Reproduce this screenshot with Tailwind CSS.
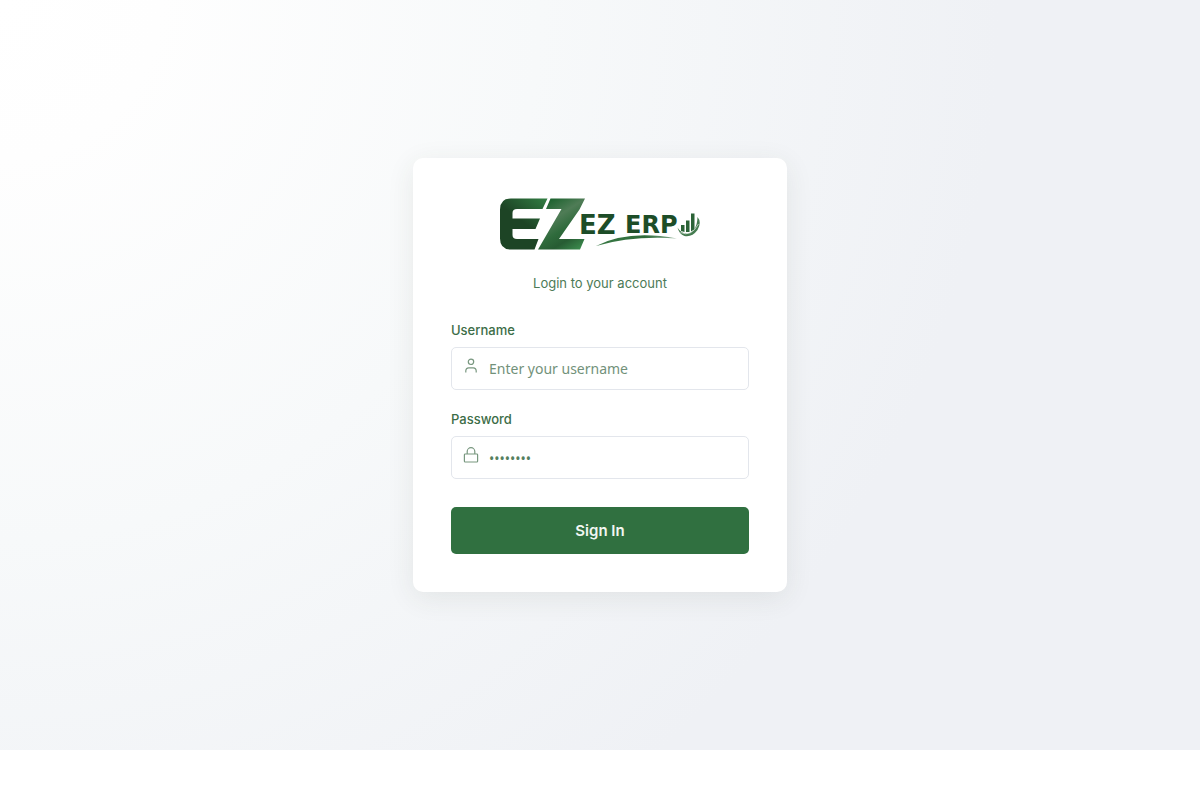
<!DOCTYPE html>
<html lang="en">
<head>
<meta charset="utf-8">
<meta name="viewport" content="width=device-width, initial-scale=1">
<title>EZ ERP - Login</title>
<script src="https://cdn.jsdelivr.net/npm/@tailwindcss/browser@4"></script>
</head>
<body class="flex min-h-screen flex-col bg-white pb-12 font-['Inter',sans-serif]">
<main class="flex grow items-center justify-center bg-[radial-gradient(circle_at_top_left,#ffffff_0,#fefefe_160px,#f7f9fa_540px,#eff1f5_1000px)] px-4">
  <section class="w-full max-w-[374px] rounded-[10px] bg-white px-[38px] pt-10 pb-[38px] shadow-[0_6px_28px_rgba(50,65,45,0.09)]">
    <svg class="mx-auto block h-[52px] w-[202px]" viewBox="499 198 202 52" role="img" aria-label="EZ ERP">
      <defs>
        <linearGradient id="dark" gradientUnits="userSpaceOnUse" x1="518" y1="228" x2="542" y2="196">
          <stop offset="0.2" stop-color="#1d4425"/><stop offset="1" stop-color="#317c42"/>
        </linearGradient>
        <linearGradient id="light" gradientUnits="userSpaceOnUse" x1="548" y1="202" x2="578" y2="250">
          <stop offset="0" stop-color="#1f6431"/><stop offset="0.3" stop-color="#4f7c56"/><stop offset="0.55" stop-color="#2f6b3c"/><stop offset="0.75" stop-color="#275c33"/><stop offset="1" stop-color="#3b8a4d"/>
        </linearGradient>
        <linearGradient id="swoosh" x1="0" y1="0" x2="1" y2="0">
          <stop offset="0" stop-color="#3a7a46"/><stop offset="0.6" stop-color="#2d6b39"/><stop offset="1" stop-color="#8fb096"/>
        </linearGradient>
      </defs>
      <path fill="url(#dark)" d="M511 198.500H547.500L542.500 209H517Q512.500 209 512.500 213V218.500H540L535.500 229H512.500V235Q512.500 239 517 239H538.500L534.500 249.500H511Q500 249.500 500 238.500V209.500Q500 198.500 511 198.500Z"/>
      <path fill="url(#light)" d="M550.500 198.500H585L579.500 209.500L559 239H584.500L580 249.500H538L561.500 209H546Z"/>
      <g fill="#1d4d28" font-family="DejaVu Sans" font-weight="700">
        <text x="579" y="233.500" font-size="26">EZ</text>
        <text x="625" y="232.500" font-size="24">ERP</text>
      </g>
      <path fill="url(#swoosh)" d="M596 246Q628 229.500 677 238.500Q632 235.500 596 246Z"/>
      <path fill="#2b6337" d="M681 225h3.500v7l-3.500 -1zM686 220.500h3.500v11.500h-3.500zM691 213.500h3.500v16l-3.500 2z"/>
      <path fill="#457c50" d="M677.500 227.500Q681 233.500 687 233.500Q697 232 697.500 217Q702 222 697.500 230Q692 237.500 684.500 236Q679 234 677.500 227.500Z"/>
      <path d="M680.500 232.500Q691 237.500 698.500 224" fill="none" stroke="#fff" stroke-width="0.600"/>
    </svg>
    <p class="mt-6 text-center text-[13px] leading-[18px] text-[#4c7a56]">Login to your account</p>
    <form class="mt-[29px]">
      <label for="username" class="block text-[13px] leading-[18px] font-medium text-[#3c6d47]">Username</label>
      <div class="relative mt-2">
        <svg class="pointer-events-none absolute top-[11px] left-3 size-4 text-[#78977f]" viewBox="0 0 16 16" fill="none" stroke="currentColor" stroke-width="1.200" aria-hidden="true">
          <circle cx="8" cy="3.800" r="2.700"/><path d="M2.800 14.500V13Q2.800 9.800 5.800 9.800H10.200Q13.200 9.800 13.200 13V14.500"/>
        </svg>
        <input id="username" type="text" placeholder="Enter your username" class="block h-[43px] w-full rounded-[5px] border border-[#e3e6ec] bg-white pr-3 pl-[37px] font-['Noto_Sans',sans-serif] text-[14px] text-[#3c6d47] placeholder:text-[#72917a]">
      </div>
      <label for="password" class="mt-5 block text-[13px] leading-[18px] font-medium text-[#3c6d47]">Password</label>
      <div class="relative mt-2">
        <svg class="pointer-events-none absolute top-[11px] left-3 size-4 text-[#78977f]" viewBox="0 0 16 16" fill="none" stroke="currentColor" stroke-width="1.200" aria-hidden="true">
          <rect x="1.400" y="7" width="13.200" height="8" rx="0.800"/><path d="M4.200 7V4.500a3.800 3.800 0 0 1 7.600 0V7"/>
        </svg>
        <input id="password" type="password" placeholder="••••••••" class="block h-[43px] w-full rounded-[5px] border border-[#e3e6ec] bg-white pt-0.5 pr-3 pl-[37px] font-['Noto_Sans',sans-serif] text-[14px] text-[#3c6d47] placeholder:text-[#55805f]">
      </div>
      <button type="submit" class="mt-7 block h-[47px] w-full rounded-[5px] bg-[#307040] pt-0.5 text-[15px] font-semibold text-[#f1f6f2]">Sign In</button>
    </form>
  </section>
</main>
</body>
</html>
